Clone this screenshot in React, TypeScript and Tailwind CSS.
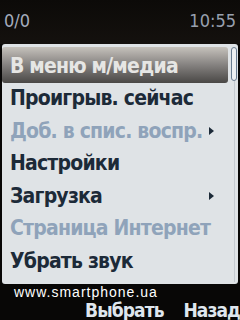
import React from 'react';

const items = [
  { label: 'В меню м/медиа', state: 'active' },
  { label: 'Проигрыв. сейчас', state: 'normal' },
  { label: 'Доб. в спис. воспр.', state: 'disabled', sub: true },
  { label: 'Настройки', state: 'normal' },
  { label: 'Загрузка', state: 'normal', sub: true },
  { label: 'Страница Интернет', state: 'disabled' },
  { label: 'Убрать звук', state: 'normal' },
];

function Arrow() {
  return (
    <svg width="5" height="8" viewBox="0 0 5 8" className="absolute right-[14px] top-1/2 -translate-y-1/2">
      <path d="M0 0 L5 4 L0 8 Z" fill="#1c2a38" />
    </svg>
  );
}

export default function App() {
  return (
    <div
      className="w-[240px] h-[320px] bg-[#080706] flex flex-col overflow-hidden"
      style={{ fontFamily: '"DejaVu Sans Condensed", "DejaVu Sans", sans-serif' }}
    >
      {/* статус */}
      <div className="h-[44px] flex items-start justify-between px-[4px] pt-[7px] text-[18px] text-[#a4acbc] bg-gradient-to-b from-[#0c0a08] to-[#14110e]">
        <span>0/0</span>
        <span className="text-[#98a0ae]">10:55</span>
      </div>

      {/* меню */}
      <div className="relative mx-[2px] h-[240px] rounded-[3px] bg-[#dfe3e6] pt-[6px] pr-[10px]">
        {items.map((it) => (
          <div key={it.label} className="relative h-[32.5px] flex items-center">
            {it.state === 'active' ? (
              <div className="absolute inset-x-0 top-[-3px] bottom-0 rounded-[3px] bg-gradient-to-b from-[#c6c2bc] via-[#858280] to-[#4a4846]" />
            ) : null}
            <span
              className={
                'relative pl-[8px] text-[21px] font-bold tracking-[-0.8px] ' +
                (it.state === 'active'
                  ? 'text-[#e6e6e4]'
                  : it.state === 'disabled'
                  ? 'text-[#8fa3ba]'
                  : 'text-[#1c2a38]')
              }
            >
              {it.label}
            </span>
            {it.sub ? <Arrow /> : null}
          </div>
        ))}

        {/* скролл */}
        <div className="absolute right-[1px] top-[3px] bottom-[2px] w-[6px] flex flex-col items-center">
          <div className="w-[6px] h-[34px] rounded-[3px] border border-[#6a7c90] bg-[#eef0f2]" />
          <div className="flex-1 w-[1px] bg-[#c4cad0]" />
        </div>
      </div>

      {/* низ */}
      <div className="flex-1 flex flex-col">
        <div
          className="pl-[14px] pt-[1px] text-[14px] text-white tracking-[1px] leading-[15px]"
          style={{ fontFamily: '"Liberation Sans", sans-serif' }}
        >
          www.smartphone.ua
        </div>
        <div className="flex justify-between pl-[85px] text-[19px] font-bold tracking-[-0.9px] text-[#dfe6ee] leading-[20px]">
          <span>Выбрать</span>
          <span>Назад</span>
        </div>
      </div>
    </div>
  );
}
